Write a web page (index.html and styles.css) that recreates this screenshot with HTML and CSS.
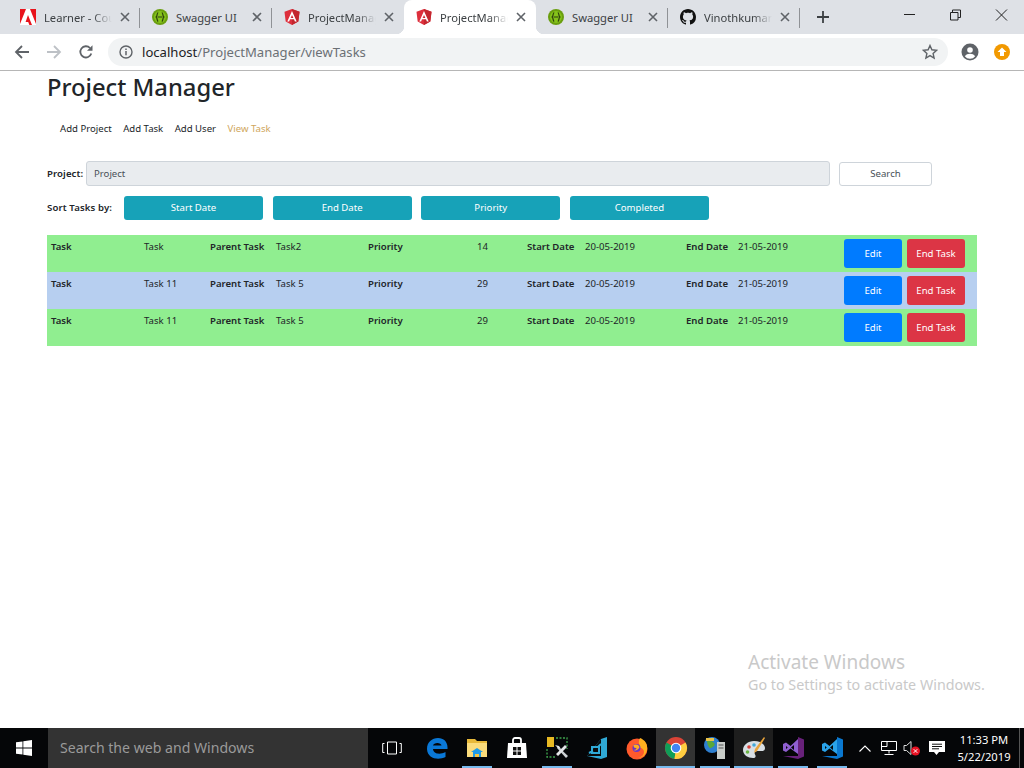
FILE: index.html
```html
<!DOCTYPE html>
<html lang="en">
<head>
<meta charset="utf-8">
<title>Project Manager</title>
<link rel="stylesheet" href="styles.css">
</head>
<body>
<svg class="defs" width="0" height="0">
  <symbol id="i-adobe" viewBox="0 0 16 16"><rect width="16" height="16" fill="#fff"/><path d="M0 0h6L0 15zM16 0h-6l6 15zM8 6l4 10H9.400L8.200 13H5.600z" fill="#e8141c"/></symbol>
  <symbol id="i-swagger" viewBox="0 0 16 16"><circle cx="8" cy="8" r="8" fill="#6a9e0f"/><circle cx="8" cy="8" r="6" fill="#85c31a"/><path d="M6.200 3.500C4.700 4 5.400 7.400 4.200 8c1.200.6.5 4 2 4.500M9.800 3.500c1.500.5.800 3.900 2 4.500-1.200.6-.5 4-2 4.500M5.800 8h4.400" fill="none" stroke="#2c3f0c" stroke-width="1.200"/></symbol>
  <symbol id="i-angular" viewBox="0 0 16 16"><path d="M8 0L.5 2.700l1.200 9.900L8 16l6.300-3.400 1.200-9.900z" fill="#dd2f3c"/><path d="M8 0v16l6.300-3.400 1.200-9.900z" fill="#c3272f"/><path d="M8 2L3.300 12.500h1.800l.9-2.300h4l.9 2.300h1.800zM8 6l1.400 2.900H6.600z" fill="#fff"/></symbol>
  <symbol id="i-github" viewBox="0 0 16 16"><path d="M8 0C3.580 0 0 3.580 0 8c0 3.540 2.290 6.530 5.470 7.590.4.070.55-.17.55-.38 0-.19-.01-.82-.01-1.490-2.010.37-2.530-.49-2.690-.94-.09-.23-.48-.94-.82-1.130-.28-.15-.68-.52-.01-.53.630-.01 1.080.58 1.230.82.720 1.210 1.870.870 2.330.660.070-.52.280-.87.510-1.070-1.780-.2-3.640-.89-3.640-3.950 0-.87.310-1.590.820-2.150-.08-.2-.36-1.020.08-2.120 0 0 .67-.21 2.200.820.640-.18 1.320-.27 2-.27s1.360.09 2 .27c1.530-1.040 2.200-.82 2.200-.82.440 1.100.160 1.920.080 2.120.510.560.820 1.270.820 2.150 0 3.070-1.870 3.750-3.650 3.950.290.250.540.730.540 1.480 0 1.070-.01 1.930-.01 2.200 0 .21.150.46.550.38A8.010 8.010 0 0 0 16 8c0-4.420-3.580-8-8-8z" fill="#111"/></symbol>
  <symbol id="i-close" viewBox="0 0 10 10"><path d="M1 1l8 8M9 1L1 9" fill="none" stroke="#5f6368" stroke-width="1.600"/></symbol>
</svg>

<div class="tabstrip">
  <div class="tab"><svg class="favicon"><use href="#i-adobe"/></svg><span class="tab-title tab-fade">Learner - Course</span><svg class="tab-x"><use href="#i-close"/></svg></div>
  <div class="tab"><svg class="favicon"><use href="#i-swagger"/></svg><span class="tab-title">Swagger UI</span><svg class="tab-x"><use href="#i-close"/></svg></div>
  <div class="tab tab-before-active"><svg class="favicon"><use href="#i-angular"/></svg><span class="tab-title tab-fade">ProjectManager</span><svg class="tab-x"><use href="#i-close"/></svg></div>
  <div class="tab tab-active"><svg class="favicon"><use href="#i-angular"/></svg><span class="tab-title tab-fade">ProjectManager</span><svg class="tab-x"><use href="#i-close"/></svg></div>
  <div class="tab"><svg class="favicon"><use href="#i-swagger"/></svg><span class="tab-title">Swagger UI</span><svg class="tab-x"><use href="#i-close"/></svg></div>
  <div class="tab"><svg class="favicon"><use href="#i-github"/></svg><span class="tab-title tab-fade">Vinothkumar</span><svg class="tab-x"><use href="#i-close"/></svg></div>
  <svg class="newtab" viewBox="0 0 14 14"><path d="M7 1v12M1 7h12" fill="none" stroke="#3c4043" stroke-width="1.800"/></svg>
  <div class="winctl">
    <svg class="winbtn" viewBox="0 0 46 30"><path d="M18 14.500h11" stroke="#222" fill="none"/></svg>
    <svg class="winbtn" viewBox="0 0 46 30"><path d="M18.500 12.500h7.500v7.500h-7.500zM20.500 12.500v-2.500h8v7.500h-2.500" stroke="#222" fill="none"/></svg>
    <svg class="winbtn" viewBox="0 0 46 30"><path d="M18 9.500l11 11M29 9.500l-11 11" stroke="#222" fill="none"/></svg>
  </div>
</div>

<div class="toolbar">
  <svg class="tool-ic" viewBox="0 0 16 16"><path d="M15 8H2.500M8 2L2 8l6 6" fill="none" stroke="#5f6368" stroke-width="1.800"/></svg>
  <svg class="tool-ic" viewBox="0 0 16 16"><path d="M1 8h12.500M8 2l6 6-6 6" fill="none" stroke="#bdc1c6" stroke-width="1.800"/></svg>
  <svg class="tool-ic" viewBox="0 0 16 16"><path d="M13.300 9.500A5.600 5.600 0 1 1 12 4" fill="none" stroke="#5f6368" stroke-width="1.800"/><path d="M14.500 1.200v5.600H9z" fill="#5f6368"/></svg>
  <div class="omnibox">
    <svg class="omni-info" viewBox="0 0 14 14"><circle cx="7" cy="7" r="6" fill="none" stroke="#5f6368" stroke-width="1.400"/><path d="M7 6v4.200M7 3.600v1.500" stroke="#5f6368" stroke-width="1.500"/></svg>
    <span class="url"><span class="url-host">localhost</span>/ProjectManager/viewTasks</span>
    <svg class="omni-star" viewBox="0 0 16 16"><path d="M8 1.500l1.900 4.300 4.700.5-3.500 3.100 1 4.600L8 11.600l-4.100 2.400 1-4.600L1.400 6.300l4.700-.5z" fill="none" stroke="#5f6368" stroke-width="1.400"/></svg>
  </div>
  <svg class="profile" viewBox="0 0 18 18"><circle cx="9" cy="9" r="8.500" fill="#5f6368"/><circle cx="9" cy="7" r="2.800" fill="#fff"/><path d="M3.800 13.300c1-1.900 3.200-2.600 5.200-2.600s4.200.7 5.200 2.600A6.600 6.600 0 0 1 9 15.800a6.600 6.600 0 0 1-5.200-2.500z" fill="#fff"/></svg>
  <svg class="update" viewBox="0 0 16 16"><circle cx="8" cy="8" r="8" fill="#f29900"/><path d="M8 3.500L12.500 8H10v4H6V8H3.500z" fill="#fff"/></svg>
</div>

<main class="page">
  <h1 class="title">Project Manager</h1>
  <nav class="nav">
    <a class="nav-link">Add Project</a>
    <a class="nav-link">Add Task</a>
    <a class="nav-link">Add User</a>
    <a class="nav-link nav-current">View Task</a>
  </nav>
  <div class="search-row">
    <label class="strong project-label">Project:</label>
    <div class="project-input">Project</div>
    <button class="btn btn-search">Search</button>
  </div>
  <div class="sort-row">
    <span class="strong sort-label">Sort Tasks by:</span>
    <button class="btn btn-sort">Start Date</button>
    <button class="btn btn-sort">End Date</button>
    <button class="btn btn-sort">Priority</button>
    <button class="btn btn-sort">Completed</button>
  </div>
  <div class="tasks">
    <div class="task task-green">
      <span class="strong">Task</span><span>Task</span>
      <span class="strong">Parent Task</span><span>Task2</span>
      <span class="strong">Priority</span><span>14</span>
      <span class="strong">Start Date</span><span>20-05-2019</span>
      <span class="strong">End Date</span><span>21-05-2019</span>
      <div class="task-actions"><button class="btn btn-edit">Edit</button><button class="btn btn-end">End Task</button></div>
    </div>
    <div class="task task-blue">
      <span class="strong">Task</span><span>Task 11</span>
      <span class="strong">Parent Task</span><span>Task 5</span>
      <span class="strong">Priority</span><span>29</span>
      <span class="strong">Start Date</span><span>20-05-2019</span>
      <span class="strong">End Date</span><span>21-05-2019</span>
      <div class="task-actions"><button class="btn btn-edit">Edit</button><button class="btn btn-end">End Task</button></div>
    </div>
    <div class="task task-green">
      <span class="strong">Task</span><span>Task 11</span>
      <span class="strong">Parent Task</span><span>Task 5</span>
      <span class="strong">Priority</span><span>29</span>
      <span class="strong">Start Date</span><span>20-05-2019</span>
      <span class="strong">End Date</span><span>21-05-2019</span>
      <div class="task-actions"><button class="btn btn-edit">Edit</button><button class="btn btn-end">End Task</button></div>
    </div>
  </div>
  <div class="watermark">
    <div class="wm-title">Activate Windows</div>
    <div class="wm-sub">Go to Settings to activate Windows.</div>
  </div>
</main>

<footer class="taskbar">
  <div class="start"><svg class="start-ic" viewBox="0 0 16 16"><path d="M0 2.300l6.500-.9v6.200H0zM7.300 1.300L16 0v7.600H7.300zM0 8.400h6.500v6.200L0 13.700zM7.300 8.400H16V16l-8.700-1.300z" fill="#fff"/></svg></div>
  <div class="tb-search">Search the web and Windows</div>
  <div class="taskview"><svg class="tv-ic" viewBox="0 0 20 14"><path d="M5.500 1h9v12h-9zM2.500 2.500H.7v9h1.800M17.500 2.500h1.800v9h-1.800" fill="none" stroke="#fff" stroke-width="1"/></svg></div>
  <div class="tb-apps">
    <div class="app"><svg class="app-ic" viewBox="0 0 24 24"><path d="M2 13C2 6 7 2 13 2c6 0 10 4 9.500 11H8c.3 5 7 6 12.500 3v5c-7 3.500-18 2-18.500-8zM8 9.500h8.500C16.300 6 8.500 6 8 9.500z" fill="#0a78d7"/></svg></div>
    <div class="app app-open"><svg class="app-ic" viewBox="0 0 24 24"><path d="M2 3h8l2 2h10v3H2z" fill="#e8b93a"/><path d="M2 7h20v14H2z" fill="#fbdc7c"/><path d="M8 21v-5h8v5z" fill="#1e9be8"/><path d="M6 16l6-4 6 4z" fill="#1e9be8"/><path d="M10 21v-3h4v3z" fill="#f4c542"/></svg></div>
    <div class="app"><svg class="app-ic" viewBox="0 0 24 24"><path d="M3 7h18l1 15H2z" fill="#fff"/><path d="M8 9V4a2 2 0 0 1 2-2h4a2 2 0 0 1 2 2v5" fill="none" stroke="#fff" stroke-width="1.800"/><path d="M8 11h3.500v3.500H8zM12.500 11H16v3.500h-3.500zM8 15.500h3.500V19H8zM12.500 15.500H16V19h-3.500z" fill="#111"/></svg></div>
    <div class="app app-open"><svg class="app-ic" viewBox="0 0 24 24"><path d="M2 1h7v10H2z" fill="#e8b923"/><path d="M11 2h11v11" fill="none" stroke="#3fa34d" stroke-width="1.300" stroke-dasharray="2 1.500"/><path d="M2 13v8h8" fill="none" stroke="#3fa34d" stroke-width="1.300" stroke-dasharray="2 1.500"/><path d="M12 12l9 10 2-2-10-9.500z" fill="#cfd3d6"/><path d="M20 9l-9 9 2 2 9-9zM10 9l4 1 2 3-3-1z" fill="#e4e6e8"/></svg></div>
    <div class="app"><svg class="app-ic" viewBox="0 0 24 24"><path d="M16 3l6-2v20l-6 2-14-3z" fill="#2fa9d6"/><path d="M16 3v17L2 20z" fill="#0a0a0a"/><path d="M7 11h7v6H7z" fill="none" stroke="#2fa9d6" stroke-width="2"/><path d="M4 17l4-2M13 11l3-3" stroke="#2fa9d6" stroke-width="2"/></svg></div>
    <div class="app"><svg class="app-ic" viewBox="0 0 24 24"><circle cx="12" cy="13" r="10.500" fill="#ff5a2c"/><path d="M15 2c5 2 8 6 7 12-1 5-5 8-9 8 4-1 6-3 6-6 0-3-3-5-6-4-1-2 0-3 2-3-2-1-1-5 0-7z" fill="#ffb01f"/><circle cx="11.500" cy="12" r="4" fill="#6a36c9"/><path d="M8.500 9c2-1 5-1 6 2-1 3-4 4-6 3 2 0 3-1 3-2-1 0-3 0-3-3z" fill="#ffb01f"/></svg></div>
    <div class="app app-active"><svg class="app-ic" viewBox="0 0 24 24"><circle cx="12" cy="12" r="11" fill="#db4437"/><path d="M12 12L2.470 6.500A11 11 0 0 0 10.500 22.900z" fill="#0f9d58"/><path d="M12 12L21.530 6.500A11 11 0 0 1 10.500 22.900z" fill="#ffcd40"/><circle cx="12" cy="12" r="5.300" fill="#fff"/><circle cx="12" cy="12" r="4.200" fill="#4285f4"/></svg></div>
    <div class="app app-open"><svg class="app-ic" viewBox="0 0 24 24"><circle cx="9" cy="9" r="8" fill="#2e7fd0"/><path d="M4 5c3-2 5 0 7 2s-1 4-3 5-4-4-4-7z" fill="#59a83a"/><path d="M3 2h8v3H3z" fill="#e8c34a"/><path d="M14 6h8v17h-8z" fill="#c8ccc9"/><path d="M15.500 9h5M15.500 12h5" stroke="#555"/></svg></div>
    <div class="app app-hover"><svg class="app-ic" viewBox="0 0 24 24"><path d="M12 5C6 5 1 9 1 14s5 8 10 8c3 0 3-2 2-3.500s0-3.500 2.500-3.500H20c2 0 3-1 3-3 0-4-5-7-11-7z" fill="#d8dfe4"/><circle cx="7" cy="11" r="1.800" fill="#d8413a"/><circle cx="12" cy="9" r="1.800" fill="#43a8d8"/><circle cx="5.500" cy="16" r="1.800" fill="#6bb544"/><path d="M22 1l1 1-8 13-3 2 1-4z" fill="#e8a33a"/></svg></div>
    <div class="app app-open"><svg class="app-ic" viewBox="0 0 24 24"><path d="M17 1l6 2.500v17L17 23 2 20h15V4z" fill="#68217a"/><path d="M2 8l3-1.500 4.500 3.500L17 3v15l-7.500-5.500L5 16l-3-1.500zM5 10v3l1.800-1.500zM13 9l-3 2.500 3 2.500z" fill="#8f5fd0"/></svg></div>
    <div class="app app-open"><svg class="app-ic" viewBox="0 0 24 24"><path d="M17 1l6 2.500v17L17 23 2 20h15V4z" fill="#0a78d0"/><path d="M2 8l3-1.500 4.500 3.500L17 3v15l-7.500-5.500L5 16l-3-1.500zM5 10v3l1.800-1.500zM13 9l-3 2.500 3 2.500z" fill="#2aa3ea"/></svg></div>
  </div>
  <div class="tray">
    <svg class="tray-chev" viewBox="0 0 12 7"><path d="M.5 6.500L6 1l5.500 5.500" fill="none" stroke="#fff" stroke-width="1.100"/></svg>
    <svg class="tray-net" viewBox="0 0 18 16"><path d="M1.500 1.500h15v9h-15zM7 1.500v5H1.500M9 10.500v3M4.500 14.500h9" fill="none" stroke="#fff"/></svg>
    <svg class="tray-vol" viewBox="0 0 18 16"><path d="M1 5.500h2.500L8 1.500v13l-4.500-4H1z" fill="none" stroke="#ddd"/><circle cx="12.500" cy="11" r="4.500" fill="#e81123"/><path d="M10.700 9.200l3.600 3.600M14.300 9.200l-3.600 3.600" stroke="#fff"/></svg>
    <svg class="tray-note" viewBox="0 0 16 16"><path d="M0 1h16v11H10l-2.500 3L5 12H0z" fill="#fff"/><path d="M3 4.200h10M3 6.500h10M3 8.800h7" stroke="#111"/></svg>
    <div class="clock"><div>11:33 PM</div><div>5/22/2019</div></div>
    <div class="show-desktop"></div>
  </div>
</footer>
</body>
</html>
```
FILE: styles.css
```css
* { box-sizing: border-box; }
html, body { height: 100%; margin: 0; }
body {
  display: flex;
  flex-direction: column;
  height: 768px;
  overflow: hidden;
  background: #fff;
  font-family: "Noto Sans", "Open Sans", "Liberation Sans", sans-serif;
  color: #212529;
}
.defs { position: absolute; }

/* Browser tab strip */
.tabstrip {
  display: flex;
  align-items: stretch;
  height: 34px;
  padding-left: 8px;
  background: #dee1e6;
  flex: none;
}
.tab {
  position: relative;
  display: flex;
  align-items: center;
  width: 132px;
  padding: 0 10px 0 12px;
  font-size: 11.200px;
  color: #3c4043;
}
.tab::after {
  content: "";
  position: absolute;
  right: 0;
  top: 8px;
  height: 20px;
  width: 1px;
  background: #8f9296;
}
.tab-before-active::after { display: none; }
.tab-active {
  background: #fff;
  border-radius: 8px 8px 0 0;
}
.tab-active::after { display: none; }
.tab-active::before {
  content: "";
  position: absolute;
  left: -8px;
  right: -8px;
  bottom: 0;
  height: 8px;
  z-index: 0;
  background:
    radial-gradient(circle at 0 0, #dee1e6 8px, #fff 8.500px) left / 8px 8px no-repeat,
    radial-gradient(circle at 100% 0, #dee1e6 8px, #fff 8.500px) right / 8px 8px no-repeat;
}
.favicon { width: 16px; height: 16px; flex: none; position: relative; }
.tab-title {
  flex: 1;
  min-width: 0;
  margin-left: 8px;
  white-space: nowrap;
  overflow: hidden;
}
.tab-fade {
  -webkit-mask-image: linear-gradient(to right, #000 70%, transparent 97%);
  mask-image: linear-gradient(to right, #000 70%, transparent 97%);
}
.tab-x { width: 10px; height: 10px; flex: none; margin-left: 6px; position: relative; }
.newtab { width: 14px; height: 14px; margin: 10px 0 0 16px; flex: none; }
.winctl { display: flex; margin-left: auto; }
.winbtn { width: 46px; height: 30px; flex: none; }

/* Browser toolbar */
.toolbar {
  display: flex;
  align-items: center;
  flex: none;
  height: 37px;
  padding: 0 14px 1px 14px;
  border-bottom: 1px solid #b6b6b6;
  background: #fff;
}
.tool-ic { width: 16px; height: 16px; flex: none; margin-right: 16px; }
.omnibox {
  display: flex;
  align-items: center;
  flex: none;
  width: 840px;
  height: 28px;
  margin-left: -2px;
  padding: 0 10px 0 11px;
  border-radius: 14px;
  background: #f1f3f4;
}
.omni-info { width: 14px; height: 14px; flex: none; }
.url { margin-left: 9px; font-size: 13.100px; color: #6b7075; flex: 1; }
.url-host { color: #202124; }
.omni-star { width: 16px; height: 16px; flex: none; }
.profile { width: 18px; height: 18px; flex: none; margin-left: 13px; }
.update { width: 16px; height: 16px; flex: none; margin-left: 15px; }

/* Page */
.page {
  position: relative;
  flex: 1;
  min-height: 0;
  padding: 0 47px;
}
.title {
  margin: 0;
  padding-top: 1px;
  font-size: 23.750px;
  line-height: 30px;
  font-weight: 500;
}
.nav {
  display: flex;
  gap: 11.400px;
  margin-top: 20px;
  padding-left: 13px;
  font-size: 9.600px;
  line-height: 14px;
}
.nav-link { color: #212529; }
.nav-current { color: #cfa65c; }
.strong { font-weight: 600; }
.search-row {
  display: flex;
  align-items: center;
  margin-top: 25px;
  font-size: 9.600px;
}
.project-label { width: 39px; flex: none; letter-spacing: 0.100px; }
.project-input {
  width: 744px;
  height: 25px;
  padding: 0 7px;
  line-height: 23px;
  color: #495057;
  background: #e9ecef;
  border: 1px solid #ced4da;
  border-radius: 3px;
  flex: none;
}
.btn {
  font-family: inherit;
  font-size: 9.600px;
  line-height: 14px;
  border: 1px solid transparent;
  border-radius: 3px;
  padding: 0;
  color: #fff;
  flex: none;
}
.btn-search {
  width: 93px;
  height: 24px;
  margin-left: 9px;
  color: #495057;
  background: #fff;
  border-color: #ced4da;
}
.sort-row {
  display: flex;
  align-items: center;
  gap: 9.650px;
  margin-top: 10px;
  font-size: 9.600px;
}
.sort-label { width: 67.350px; flex: none; position: relative; top: -1px; letter-spacing: 0.120px; white-space: nowrap; }
.btn-sort { width: 139px; height: 24px; background: #17a2b8; }
.tasks { margin-top: 15px; }
.task {
  display: grid;
  grid-template-columns: 93px 66px 66px 92px 109px 50px 58px 101px 52px 106px 1fr;
  height: 37px;
  padding: 4px 0 0 4px;
  font-size: 9.600px;
  line-height: 16px;
}
.task-green { background: #90ee90; }
.task-blue { background: #b7cff0; }
.task-actions { display: flex; gap: 5px; }
.btn-edit, .btn-end { width: 58px; height: 29px; }
.btn-edit { background: #007bff; }
.btn-end { background: #dc3545; }

/* Overlay watermark */
.watermark {
  position: absolute;
  left: 748px;
  top: 579px;
  color: #c9c9c9;
  pointer-events: none;
  white-space: nowrap;
}
.wm-title { font-size: 19px; line-height: 24px; }
.wm-sub { font-size: 14.300px; line-height: 21px; }

/* Windows taskbar */
.taskbar {
  display: flex;
  align-items: stretch;
  flex: none;
  height: 40px;
  background: #050608;
  color: #fff;
}
.start { width: 48px; display: flex; align-items: center; justify-content: center; flex: none; }
.start-ic { width: 16px; height: 16px; }
.tb-search {
  width: 320px;
  flex: none;
  padding-left: 12px;
  font-size: 14.100px;
  line-height: 40px;
  color: #9a9a9a;
  background: #333;
}
.taskview { width: 48px; display: flex; align-items: center; justify-content: center; flex: none; }
.tv-ic { width: 20px; height: 14px; }
.tb-apps { display: flex; flex: none; margin-left: 1px; }
.app {
  width: 40px;
  display: flex;
  align-items: center;
  justify-content: center;
  flex: none;
}
.app:nth-child(n+6) { width: 39px; }
.app-open { background: linear-gradient(#76b9ed, #76b9ed) center bottom / 30px 2px no-repeat; }
.app-active { background: linear-gradient(#76b9ed, #76b9ed) center bottom / 100% 2px no-repeat, #333; }
.app-hover { background: linear-gradient(#76b9ed, #76b9ed) center bottom / 100% 2px no-repeat, #1e1e1e; }
.app-ic { width: 24px; height: 24px; }
.tray { display: flex; align-items: center; margin-left: auto; flex: none; }
.tray-chev { width: 12px; height: 7px; margin-right: 9px; }
.tray-net { width: 18px; height: 16px; margin-right: 5px; }
.tray-vol { width: 18px; height: 16px; margin-right: 8px; }
.tray-note { width: 16px; height: 16px; margin-right: 9px; }
.clock { width: 60px; margin-right: 5px; text-align: center; font-size: 11.200px; line-height: 17px; }
.show-desktop { width: 5px; height: 100%; border-left: 1px solid #555; }
```
